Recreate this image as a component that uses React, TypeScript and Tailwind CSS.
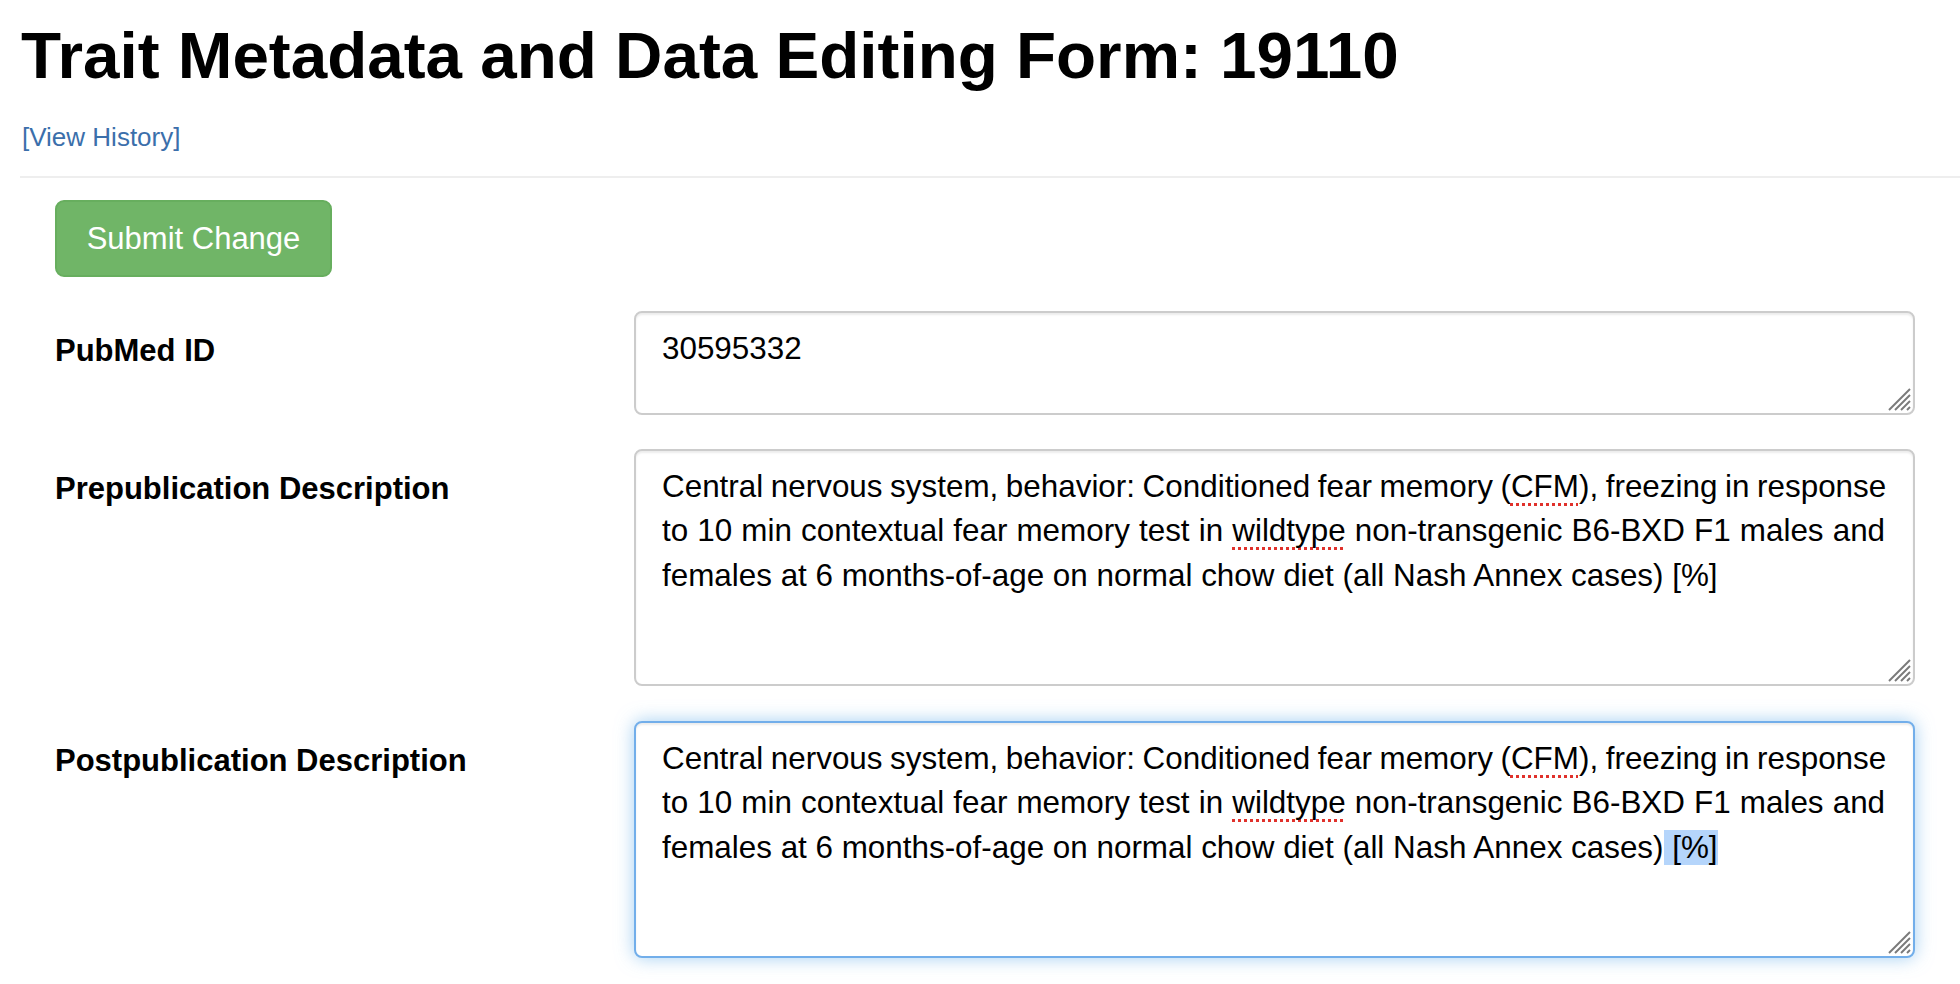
import React from "react";

const font = { fontFamily: '"Liberation Sans", Arial, Helvetica, sans-serif' };

function Grip() {
  return (
    <svg
      className="absolute right-[2px] bottom-[2px]"
      width="24"
      height="24"
      viewBox="0 0 24 24"
    >
      <line x1="23" y1="2" x2="2" y2="23" stroke="#7a7a7a" strokeWidth="2" />
      <line x1="23" y1="8" x2="8" y2="23" stroke="#7a7a7a" strokeWidth="2" />
      <line x1="23" y1="14" x2="14" y2="23" stroke="#7a7a7a" strokeWidth="2" />
      <line x1="23" y1="20" x2="20" y2="23" stroke="#7a7a7a" strokeWidth="2" />
    </svg>
  );
}

function Spell({ children }: { children: React.ReactNode }) {
  return (
    <span className="underline decoration-dotted decoration-[#e0312b] decoration-[3px] underline-offset-[6px] [text-decoration-skip-ink:none]">
      {children}
    </span>
  );
}

function Desc({ selected }: { selected?: boolean }) {
  return (
    <>
      <span className="whitespace-nowrap [word-spacing:-1.1px]">
        Central nervous system, behavior: Conditioned fear memory (<Spell>CFM</Spell>), freezing in response
      </span>
      <br />
      <span className="whitespace-nowrap [word-spacing:0.4px]">
        to 10 min contextual fear memory test in <Spell>wildtype</Spell> non-transgenic B6-BXD F1 males and
      </span>
      <br />
      <span className="whitespace-nowrap">
        females at 6 months-of-age on normal chow diet (all Nash Annex cases)
        {selected ? <span className="bg-[#b5d5fb]"> [%]</span> : " [%]"}
      </span>
    </>
  );
}

function Row({
  label,
  height,
  focused,
  children,
  className,
}: {
  label: string;
  height: string;
  focused?: boolean;
  children: React.ReactNode;
  className?: string;
}) {
  return (
    <div className={"flex " + (className ?? "")}>
      <div className="w-[579px] shrink-0 pt-[18px] text-[31px] leading-[44px] font-bold text-black">
        {label}
      </div>
      <div
        className={
          "relative w-[1281px] shrink-0 rounded-[8px] border-2 bg-white pl-[26px] pr-[20px] pt-[14px] text-[31.4px] leading-[44.4px] text-black " +
          height +
          " " +
          (focused
            ? "border-[#72aeea] shadow-[inset_0_2px_2px_rgba(0,0,0,0.075),0_0_18px_rgba(102,175,233,0.6)]"
            : "border-[#cccccc] shadow-[inset_0_2px_2px_rgba(0,0,0,0.075)]")
        }
      >
        {children}
        <Grip />
      </div>
    </div>
  );
}

export default function App() {
  return (
    <div className="min-h-[984px] w-[1960px] overflow-hidden bg-white" style={font}>
      <div className="pl-[20px]">
        <h2 className="mt-[19px] pl-[1px] text-[65.6px] leading-[73px] font-bold text-black">
          Trait Metadata and Data Editing Form: 19110
        </h2>
        <div className="mt-[27px] pl-[2px] text-[26px] leading-[37px]">
          <a className="text-[#3b6fab]" href="#">
            [View History]
          </a>
        </div>
        <div className="mt-[20px] h-[2px] bg-[#eeeeee]" />
        <div className="pl-[35px]">
          <button className="mt-[22px] h-[77px] w-[277px] rounded-[9px] border-2 border-[#67ae5e] bg-[#70b567] pt-[2px] text-[31px] text-white">
            Submit Change
          </button>
          <Row label="PubMed ID" height="h-[104px]" className="mt-[34px]">
            30595332
          </Row>
          <Row label="Prepublication Description" height="h-[237px]" className="mt-[34px]">
            <Desc />
          </Row>
          <Row label="Postpublication Description" height="h-[237px]" focused className="mt-[35px]">
            <Desc selected />
          </Row>
        </div>
      </div>
    </div>
  );
}
